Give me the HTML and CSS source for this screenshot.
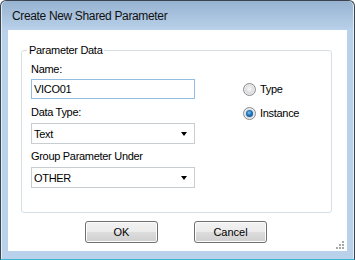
FILE: index.html
```html
<!DOCTYPE html>
<html lang="en">
<head>
  <meta charset="UTF-8" />
  <title>Create New Shared Parameter</title>
  <link rel="stylesheet" href="styles.css">
</head>
<body>

  <div class="window">
    <div class="titlebar">Create New Shared Parameter</div>

    <div class="client">
      <fieldset class="group">
        <legend>Parameter Data</legend>

        <div class="fields">
          <label class="field-label" for="param-name">Name:</label>
          <input id="param-name" class="textbox" type="text" value="VICO01">

          <div class="field-label">Data Type:</div>
          <div class="combo">
            <span>Text</span>
            <span class="arrow"></span>
          </div>

          <div class="field-label">Group Parameter Under</div>
          <div class="combo">
            <span>OTHER</span>
            <span class="arrow"></span>
          </div>
        </div>

        <div class="options">
          <div class="option"><span class="radio"></span>Type</div>
          <div class="option"><span class="radio checked"></span>Instance</div>
        </div>
      </fieldset>

      <div class="buttons">
        <button class="button">OK</button>
        <button class="button">Cancel</button>
      </div>

      <svg class="grip" width="12" height="12" viewBox="0 0 12 12">
        <g fill="#fff">
          <rect x="9" y="3" width="2" height="2"/>
          <rect x="6" y="6" width="2" height="2"/>
          <rect x="9" y="6" width="2" height="2"/>
          <rect x="3" y="9" width="2" height="2"/>
          <rect x="6" y="9" width="2" height="2"/>
          <rect x="9" y="9" width="2" height="2"/>
        </g>
        <g fill="#a4a9ae">
          <rect x="8" y="2" width="2" height="2"/>
          <rect x="5" y="5" width="2" height="2"/>
          <rect x="8" y="5" width="2" height="2"/>
          <rect x="2" y="8" width="2" height="2"/>
          <rect x="5" y="8" width="2" height="2"/>
          <rect x="8" y="8" width="2" height="2"/>
        </g>
      </svg>
    </div>
  </div>

</body>
</html>
```

FILE: styles.css
```css
body {
  margin: 0;
  font-family: 'Liberation Sans', Arial, sans-serif;
  font-size: 11px;
  letter-spacing: -0.3px;
  color: #000;
}

.window {
  width: 355px;
  height: 260px;
  box-sizing: border-box;
  display: flex;
  flex-direction: column;
  padding: 0 7px 8px 7px;
  border: 1px solid #3b4550;
  border-bottom-color: #3ab4d6;
  border-radius: 6px 6px 0 0;
  background: linear-gradient(#97b3d1, #b9d1ea 29px);
  box-shadow: inset 1px 0 #e4edf6, inset -1px 0 #e4edf6;
}

.titlebar {
  height: 29px;
  box-sizing: border-box;
  padding: 2px 0 0 4px;
  line-height: 27px;
  font-size: 12px;
  letter-spacing: -0.35px;
  color: #111;
}

.client {
  flex: 1;
  position: relative;
  padding-top: 14px;
  background: #fff;
}

.group {
  display: flex;
  gap: 48px;
  width: 311px;
  box-sizing: border-box;
  margin: 0 0 0 13px;
  padding: 6px 9px 24px;
  border: 1px solid #d5dfe5;
  border-radius: 3px;
}

.group legend {
  margin-left: -4px;
  padding: 0 2px;
  line-height: 13px;
}

.fields {
  width: 164px;
  display: flex;
  flex-direction: column;
}

.field-label {
  display: block;
  line-height: 13px;
  margin-bottom: 4px;
}

.textbox {
  height: 20px;
  box-sizing: border-box;
  margin: -1px 0 7px 0;
  padding: 0 2px;
  border: 1px solid #93bde3;
  font: inherit;
  letter-spacing: inherit;
  color: #000;
  outline: none;
}

.combo {
  height: 21px;
  box-sizing: border-box;
  display: flex;
  align-items: center;
  justify-content: space-between;
  padding: 0 7px 0 2px;
  margin-bottom: 6px;
  border: 1px solid #c8cdd2;
}

.combo:last-child {
  margin-bottom: 0;
}

.arrow {
  width: 0;
  height: 0;
  border-top: 4px solid #000;
  border-left: 3.5px solid transparent;
  border-right: 3.5px solid transparent;
}

.options {
  display: flex;
  flex-direction: column;
  gap: 10px;
  padding-top: 19px;
}

.option {
  display: flex;
  align-items: center;
  gap: 4px;
  line-height: 14px;
}

.radio {
  position: relative;
  width: 13px;
  height: 13px;
  box-sizing: border-box;
  border: 1px solid #8a8d90;
  border-radius: 50%;
  background: radial-gradient(circle at 50% 45%, #f4f4f4 10%, #d9d9d9 55%, #bdbdbd);
  box-shadow: inset 0 0 0 1px #eeeeee;
}

.radio.checked::after {
  content: "";
  position: absolute;
  left: 2px;
  top: 2px;
  width: 7px;
  height: 7px;
  border-radius: 50%;
  background: radial-gradient(circle at 45% 40%, #7fcdf5 0, #1f78c0 40%, #0a3c70 100%);
}

.buttons {
  display: flex;
  justify-content: center;
  gap: 36px;
  margin-top: 8px;
  padding-right: 3px;
}

.button {
  width: 73px;
  height: 22px;
  padding: 0;
  border: 1px solid #707070;
  border-radius: 3px;
  background: linear-gradient(#f2f2f2, #ebebeb 50%, #dddddd 50%, #cfcfcf);
  box-shadow: inset 0 0 0 1px #fcfcfc;
  font: inherit;
  letter-spacing: 0;
  color: #000;
}

.grip {
  position: absolute;
  right: 1px;
  bottom: 0;
}
```
